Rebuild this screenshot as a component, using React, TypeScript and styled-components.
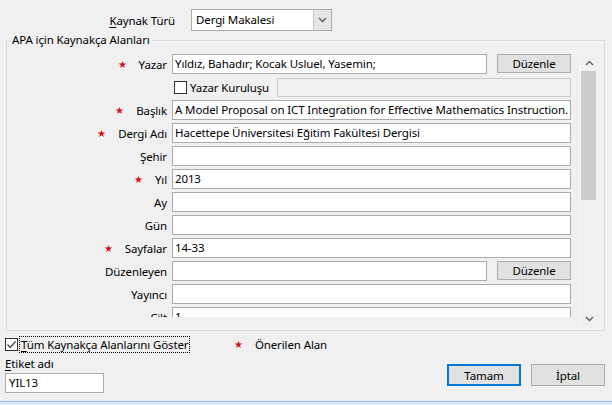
import React from 'react';
import styled, { createGlobalStyle } from 'styled-components';

type FieldType = {
	label?: string;
	required?: boolean;
	value?: string;
	edit?: boolean;
	corp?: boolean;
};

const fields: FieldType[] = [
	{ label: 'Yazar', required: true, value: 'Yıldız, Bahadır; Kocak Usluel, Yasemin;', edit: true },
	{ corp: true },
	{ label: 'Başlık', required: true, value: 'A Model Proposal on ICT Integration for Effective Mathematics Instruction.' },
	{ label: 'Dergi Adı', required: true, value: 'Hacettepe Üniversitesi Eğitim Fakültesi Dergisi' },
	{ label: 'Şehir' },
	{ label: 'Yıl', required: true, value: '2013' },
	{ label: 'Ay' },
	{ label: 'Gün' },
	{ label: 'Sayfalar', required: true, value: '14-33' },
	{ label: 'Düzenleyen', edit: true },
	{ label: 'Yayıncı' },
	{ label: 'Cilt', value: '1' },
];

const Chevron = ({ up }: { up?: boolean }) => (
	<svg width="9" height="6" viewBox="0 0 9 6">
		<path
			d={up ? 'M1 5 L4.5 1.5 L8 5' : 'M1 1 L4.5 4.5 L8 1'}
			fill="none"
			stroke="#606060"
			strokeWidth="1.4"
		/>
	</svg>
);

const Check = () => (
	<svg width="11" height="11" viewBox="0 0 11 11">
		<path d="M1.5 5.5 L4.2 8.3 L9.6 2.4" fill="none" stroke="#333" strokeWidth="1.2" />
	</svg>
);

function App() {
	return (
		<>
			<GlobalStyle />
			<View.Dialog>
				<View.TopRow>
					<Text.TopLabel>
						<u>K</u>aynak Türü
					</Text.TopLabel>
					<View.Combo>
						<Text.ComboValue>Dergi Makalesi</Text.ComboValue>
						<View.ComboButton>
							<Chevron />
						</View.ComboButton>
					</View.Combo>
				</View.TopRow>

				<View.Group>
					<Text.GroupTitle>APA için Kaynakça Alanları</Text.GroupTitle>
					<View.ScrollPanel>
						<View.Viewport>
							{fields.map((f, i) =>
								f.corp ? (
									<View.Row key={i}>
										<View.LabelCell />
										<View.CorpCell>
											<View.Box />
											<Text.CorpLabel>Yazar Kuruluşu</Text.CorpLabel>
											<View.Input disabled />
										</View.CorpCell>
									</View.Row>
								) : (
									<View.Row key={i}>
										<View.LabelCell>
											{f.required && <Text.Star>★</Text.Star>}
											<Text.Label>{f.label}</Text.Label>
										</View.LabelCell>
										<View.InputCell>
											<View.Input>{f.value}</View.Input>
											{f.edit && <View.Button>Düzenle</View.Button>}
										</View.InputCell>
									</View.Row>
								)
							)}
						</View.Viewport>
						<View.ScrollBar>
							<View.Arrow>
								<Chevron up />
							</View.Arrow>
							<View.Thumb />
							<View.Spacer />
							<View.Arrow>
								<Chevron />
							</View.Arrow>
						</View.ScrollBar>
					</View.ScrollPanel>
				</View.Group>

				<View.Footer>
					<View.ShowAll>
						<View.Box>
							<Check />
						</View.Box>
						<Text.Focused>
							<u>T</u>üm Kaynakça Alanlarını Göster
						</Text.Focused>
					</View.ShowAll>
					<View.Legend>
						<Text.Star>★</Text.Star>
						<span>Önerilen Alan</span>
					</View.Legend>
					<View.TagCol>
						<Text.TagLabel>
							<u>E</u>tiket adı
						</Text.TagLabel>
						<View.TagInput>YIL13</View.TagInput>
					</View.TagCol>
					<View.Buttons>
						<View.Button primary wide>
							Tamam
						</View.Button>
						<View.Button wide>İptal</View.Button>
					</View.Buttons>
				</View.Footer>
				<View.WindowEdge />
			</View.Dialog>
		</>
	);
}

export default App;

const GlobalStyle = createGlobalStyle`
	html, body {
		margin: 0;
		padding: 0;
		background: #f0f0f0;
	}
	body {
		font-family: "Noto Sans", "Segoe UI", sans-serif;
		font-size: 11.5px;
		letter-spacing: -0.12px;
		color: #000;
	}
	u {
		text-decoration-thickness: 1px;
		text-underline-offset: 2px;
	}
`;

type ButtonProps = {
	primary?: boolean;
	wide?: boolean;
};

const View = {
	Dialog: styled.div`
		width: 612px;
		height: 405px;
		position: relative;
		overflow: hidden;
		background: #f0f0f0;
		display: flex;
		flex-direction: column;
	`,
	TopRow: styled.div`
		display: flex;
		align-items: center;
		height: 22px;
		margin: 9px 0 9px;
	`,
	Combo: styled.div`
		display: flex;
		width: 141px;
		height: 22px;
		box-sizing: border-box;
		border: 1px solid #adadad;
		background: #fff;
		margin-left: 16px;
	`,
	ComboButton: styled.div`
		width: 17px;
		display: flex;
		align-items: center;
		justify-content: center;
		background: #e5e5e5;
		border-left: 1px solid #c4c4c4;
	`,
	Group: styled.div`
		position: relative;
		margin: 0 7px 0 6px;
		border: 1px solid #dcdcdc;
		padding: 13px 6px 3px 0;
		height: 273px;
	`,
	ScrollPanel: styled.div`
		display: flex;
		height: 273px;
	`,
	Viewport: styled.div`
		width: 564px;
		height: 263px;
		overflow: hidden;
	`,
	Row: styled.div`
		display: flex;
		height: 20px;
		margin-bottom: 3px;
	`,
	LabelCell: styled.div`
		width: 160px;
		flex: none;
		display: flex;
		align-items: center;
		justify-content: flex-end;
		padding-right: 4px;
	`,
	InputCell: styled.div`
		flex: 1;
		display: flex;
		gap: 10px;
		padding-left: 1px;
	`,
	CorpCell: styled.div`
		flex: 1;
		display: flex;
		align-items: center;
		padding-left: 3px;
	`,
	Input: styled.div<{ disabled?: boolean }>`
		flex: 1;
		height: 20px;
		box-sizing: border-box;
		border: 1px solid #acacac;
		background: ${(p) => (p.disabled ? '#f0f0f0' : '#fff')};
		padding: 0 2px;
		line-height: 18px;
		white-space: nowrap;
		overflow: hidden;
		${(p) => (p.disabled ? 'border-color: #cccccc; height: 19px;' : '')}
	`,
	Button: styled.div<ButtonProps>`
		width: 74px;
		height: ${(p) => (p.wide ? '22px' : '19px')};
		box-sizing: border-box;
		background: #e1e1e1;
		border: ${(p) => (p.primary ? '2px solid #0078d7' : '1px solid #adadad')};
		display: flex;
		align-items: center;
		justify-content: center;
		flex: none;
	`,
	Box: styled.div`
		width: 13px;
		height: 13px;
		box-sizing: border-box;
		border: 1px solid #333;
		background: #fff;
		display: flex;
		align-items: center;
		justify-content: center;
		flex: none;
	`,
	ScrollBar: styled.div`
		margin-left: 9px;
		border-left: 1px solid #fafafa;
		width: 16px;
		display: flex;
		flex-direction: column;
	`,
	Arrow: styled.div`
		height: 17px;
		display: flex;
		align-items: center;
		justify-content: center;
	`,
	Thumb: styled.div`
		height: 129px;
		width: 15px;
		background: #cdcdcd;
	`,
	Spacer: styled.div`
		flex: 1;
	`,
	Footer: styled.div`
		display: grid;
		grid-template-columns: 228px 1fr;
		padding: 5px 7px 0 5px;
	`,
	ShowAll: styled.div`
		display: flex;
		align-items: center;
		height: 16px;
		gap: 2px;
	`,
	Legend: styled.div`
		display: flex;
		align-items: center;
		height: 16px;
		padding-left: 1px;
	`,
	TagCol: styled.div`
		display: flex;
		flex-direction: column;
		padding-top: 4px;
	`,
	TagInput: styled.div`
		width: 99px;
		height: 20px;
		box-sizing: border-box;
		border: 1px solid #acacac;
		background: #fff;
		padding: 0 3px;
		line-height: 18px;
		margin-top: 1px;
	`,
	Buttons: styled.div`
		display: flex;
		justify-content: flex-end;
		gap: 10px;
		padding-top: 12px;
	`,
	WindowEdge: styled.div`
		position: absolute;
		left: 0;
		right: 0;
		bottom: 0;
		height: 3px;
		border-top: 1px solid #8fbbe6;
		background: #dce9f6;
	`,
};

const Text = {
	TopLabel: styled.span`
		width: 175px;
		text-align: right;
	`,
	ComboValue: styled.span`
		flex: 1;
		padding-left: 4px;
		line-height: 20px;
	`,
	GroupTitle: styled.span`
		position: absolute;
		top: -9px;
		left: 3px;
		padding: 0 2px;
		background: #f0f0f0;
		line-height: 16px;
	`,
	Star: styled.span`
		color: #d2101a;
		font-size: 10px;
		margin-right: 12px;
	`,
	Label: styled.span`
		white-space: nowrap;
	`,
	CorpLabel: styled.span`
		width: 90px;
		box-sizing: border-box;
		flex: none;
		padding-left: 3px;
		white-space: nowrap;
	`,
	Focused: styled.span`
		outline: 1px dotted #000;
		padding: 0 1px;
		line-height: 15px;
	`,
	TagLabel: styled.span`
		line-height: 16px;
	`,
};
